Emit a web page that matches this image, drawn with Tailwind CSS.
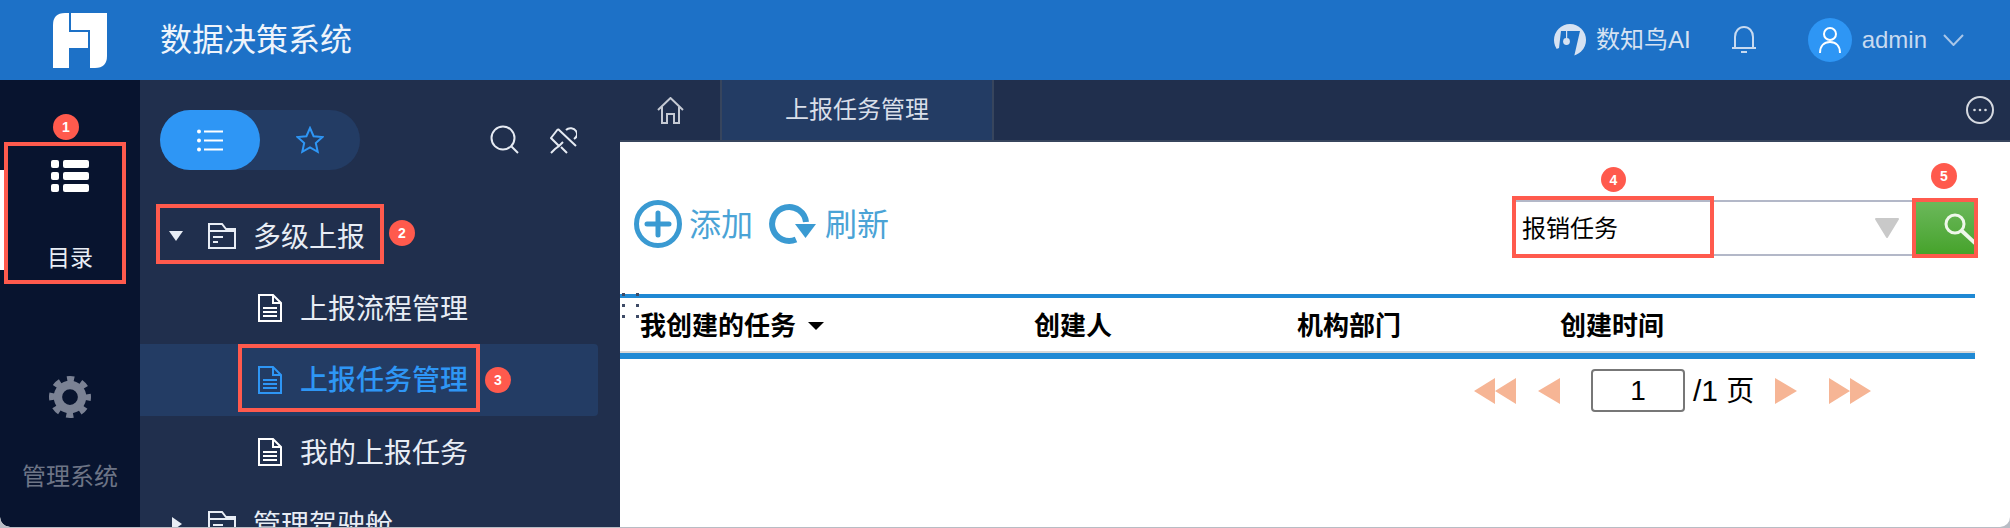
<!DOCTYPE html>
<html lang="zh-CN">

<head>
  <meta charset="UTF-8" />
  <title>数据决策系统</title>
  <script src="https://cdn.jsdelivr.net/npm/@tailwindcss/browser@4"></script>
</head>

<body class="relative w-[2010px] h-[528px] overflow-hidden bg-[#b8bcc4] font-['Liberation_Sans','Noto_Sans_CJK_SC',sans-serif]">
  <div class="h-[527px] overflow-hidden rounded-b-[10px] bg-white">
  <!-- top bar -->
  <header class="h-20 bg-[#1d71c7] flex items-center">
    <svg class="ml-[53px] w-[54px] h-[55px] fill-white" viewBox="0 0 54 55">
      <path d="M0 55V12Q0 0 12 0H16V19H35V35H16V55Z" />
      <path d="M18 0H54V43Q54 55 42 55H37V17H18Z" />
    </svg>
    <div class="ml-[53px] text-[32px] text-[#eef4fb]">数据决策系统</div>
    <div class="ml-auto flex items-center">
      <svg class="w-8 h-8" viewBox="0 0 32 32">
        <circle cx="16" cy="16" r="16" fill="#d6e2f2" />
        <path d="M7 7H26L20 33H0V26L5 24Z" fill="#1d71c7" />
        <rect x="12" y="7" width="1.2" height="8" fill="#d6e2f2" />
        <circle cx="12.5" cy="17.5" r="3.4" fill="#d6e2f2" />
      </svg>
      <div class="ml-[10px] text-2xl text-[#d6e2f2]">数知鸟AI</div>
      <svg class="ml-[41px] w-6 h-7 fill-none stroke-[#c8daf0] stroke-2" viewBox="0 0 24 28">
        <path d="M3 21V11C3 5 7 1 12 1S21 5 21 11V21M0 22H24M9 26H15" />
      </svg>
      <div class="ml-[52px] w-11 h-11 rounded-full bg-[#2e96f5] flex items-center justify-center">
        <svg class="w-6 h-7 fill-none stroke-white stroke-2" viewBox="0 0 24 28">
          <circle cx="12" cy="8" r="6" />
          <path d="M2 27C2 20 6 16 12 16S22 20 22 27" />
        </svg>
      </div>
      <div class="ml-[10px] text-2xl text-[#c8daf0]">admin</div>
      <svg class="ml-4 mr-[46px] w-[21px] h-3 fill-none stroke-[#a9c6e8] stroke-2" viewBox="0 0 21 12">
        <path d="M1 1L10.5 11L20 1" />
      </svg>
    </div>
  </header>

  <div class="flex h-[447px]">
    <!-- icon rail -->
    <aside class="w-[140px] shrink-0 bg-[#08142f] flex flex-col items-center rounded-bl-[10px]">
      <svg class="mt-20 w-[38px] h-8 fill-white" viewBox="0 0 38 32">
        <rect width="8" height="8" rx="2" />
        <rect x="12" width="26" height="8" rx="2" />
        <rect y="12" width="8" height="8" rx="2" />
        <rect x="12" y="12" width="26" height="8" rx="2" />
        <rect y="24" width="8" height="8" rx="2" />
        <rect x="12" y="24" width="26" height="8" rx="2" />
      </svg>
      <div class="mt-[49px] text-[23px] leading-[34px] text-[#e8edf5]">目录</div>
      <svg class="mt-[101px] w-[42px] h-[42px] fill-none stroke-[#7b8294]" viewBox="0 0 40 40">
        <circle cx="20" cy="20" r="11.5" stroke-width="8" />
        <circle cx="20" cy="20" r="17" stroke-width="6" stroke-dasharray="6.68 6.67" stroke-dashoffset="3.3" />
      </svg>
      <div class="mt-[42px] text-2xl leading-[34px] text-[#6d7486]">管理系统</div>
    </aside>

    <!-- tree panel -->
    <nav class="w-[480px] shrink-0 bg-[#202f4d] pt-[30px] overflow-hidden">
      <div class="flex items-center h-[60px] pl-5">
        <div class="flex w-[200px] h-[60px] rounded-full bg-[#233c64]">
          <div class="w-[100px] rounded-full bg-[#2e96f5] flex items-center justify-center">
            <svg class="w-[26px] h-[23px] fill-white" viewBox="0 0 26 23">
              <circle cx="2" cy="2.5" r="2" /><rect x="7" y="1.5" width="19" height="2" />
              <circle cx="2" cy="11.5" r="2" /><rect x="7" y="10.5" width="19" height="2" />
              <circle cx="2" cy="20.5" r="2" /><rect x="7" y="19.5" width="19" height="2" />
            </svg>
          </div>
          <div class="flex-1 flex items-center justify-center">
            <svg class="w-7 h-7 fill-none stroke-[#2e96f5] stroke-2" viewBox="0 0 28 28">
              <path d="M14 2L17.6 10.2L26.5 11.1L19.8 17L21.7 25.8L14 21.3L6.3 25.8L8.2 17L1.5 11.1L10.4 10.2Z" />
            </svg>
          </div>
        </div>
        <svg class="ml-[130px] w-[30px] h-[30px] fill-none stroke-[#e6ebf3] stroke-2" viewBox="0 0 30 30">
          <circle cx="13" cy="13" r="11.5" />
          <path d="M21.5 21.5L28 28" />
        </svg>
        <svg class="ml-[30px] w-[27px] h-[27px] fill-none stroke-[#e6ebf3] stroke-2" viewBox="0 0 27 27">
          <path d="M8 2L26 19M8 2L1 11L9 19L13 15M9 19L5 22L1 26M11 20L17 26M16 3C19 0 24 1 26 4C28 7 27 10 24 12" />
        </svg>
      </div>

      <div class="mt-[30px] text-[28px] text-[#e8edf5]">
        <div class="h-[72px] flex items-center">
          <div class="ml-[29px] w-0 h-0 border-x-[7px] border-x-transparent border-t-[10px] border-t-[#e8edf5]"></div>
          <svg class="ml-[25px] w-7 h-[26px] fill-none stroke-[#e8edf5] stroke-2" viewBox="0 0 28 26">
            <path d="M1 25V1H14L18 6H27V25ZM1 8H27M5 14H15M5 19H10" />
          </svg>
          <div class="ml-[17px] pt-[3px]">多级上报</div>
        </div>
        <div class="h-[72px] flex items-center">
          <svg class="ml-[118px] w-6 h-7 fill-none stroke-white stroke-2" viewBox="0 0 24 28">
            <path d="M1 27V1H15L23 9V27ZM15 1V9H23M5 14H19M5 18H19M5 22H19" />
          </svg>
          <div class="ml-[18px] pt-[3px]">上报流程管理</div>
        </div>
        <div class="h-[72px] flex items-center w-[458px] bg-[#233c64] rounded-r-[4px] text-[#2e96f5] font-medium">
          <svg class="ml-[118px] w-6 h-7 fill-none stroke-[#2e96f5] stroke-2" viewBox="0 0 24 28">
            <path d="M1 27V1H15L23 9V27ZM15 1V9H23M5 14H19M5 18H19M5 22H19" />
          </svg>
          <div class="ml-[18px] pt-[2px]">上报任务管理</div>
        </div>
        <div class="h-[72px] flex items-center">
          <svg class="ml-[118px] w-6 h-7 fill-none stroke-white stroke-2" viewBox="0 0 24 28">
            <path d="M1 27V1H15L23 9V27ZM15 1V9H23M5 14H19M5 18H19M5 22H19" />
          </svg>
          <div class="ml-[18px] pt-[3px]">我的上报任务</div>
        </div>
        <div class="h-[72px] flex items-center">
          <div class="ml-[32px] w-0 h-0 border-y-[7px] border-y-transparent border-l-[10px] border-l-[#e8edf5]"></div>
          <svg class="ml-[26px] w-7 h-[26px] fill-none stroke-[#e8edf5] stroke-2" viewBox="0 0 28 26">
            <path d="M1 25V1H14L18 6H27V25ZM1 8H27M5 14H15M5 19H10" />
          </svg>
          <div class="ml-[17px] pt-[3px]">管理驾驶舱</div>
        </div>
      </div>
    </nav>

    <!-- main area -->
    <main class="relative flex-1 min-w-0">
      <div class="flex h-[62px] bg-[#202f4d] border-b-2 border-[#37455d]">
        <div class="w-[100px] flex items-center justify-center">
          <svg class="w-[27px] h-[27px] fill-none stroke-[#c5cad4] stroke-2" viewBox="0 0 27 27">
            <path d="M1 13L13.5 1L26 13M5 10V26H10V17H17V26H22V10" />
          </svg>
        </div>
        <div class="w-[274px] flex items-center justify-center bg-[#233c64] border-x-2 border-[#37455d] text-2xl text-[#d9dfe9]">上报任务管理</div>
        <svg class="ml-auto mr-4 mt-4 w-7 h-7 fill-none stroke-[#d5d9e0] stroke-2" viewBox="0 0 28 28">
          <circle cx="14" cy="14" r="13" />
          <circle cx="8.5" cy="14" r="1.3" class="fill-[#d5d9e0] stroke-0" />
          <circle cx="14" cy="14" r="1.3" class="fill-[#d5d9e0] stroke-0" />
          <circle cx="19.5" cy="14" r="1.3" class="fill-[#d5d9e0] stroke-0" />
        </svg>
      </div>

      <!-- toolbar -->
      <div class="h-[152px] pt-[58px] pr-[36px] flex items-start">
        <div class="ml-[14px] h-12 flex items-center text-[32px] text-[#4aa3d6]">
          <svg class="w-12 h-12 fill-none stroke-[#3a9ad2]" viewBox="0 0 48 48">
            <circle cx="24" cy="24" r="21.5" stroke-width="5" />
            <path d="M13 24H35M24 13V35" stroke-width="5" stroke-linecap="round" />
          </svg>
          <div class="ml-[7px] pt-[2px]">添加</div>
          <svg class="ml-[16px] w-[47px] h-[42px]" viewBox="9 7 47 42">
            <path d="M46 26A17 17 0 1 0 36 43.5" fill="none" stroke="#3a9ad2" stroke-width="6" />
            <path d="M35 28H56L45.5 42Z" fill="#3a9ad2" />
          </svg>
          <div class="ml-[9px] pt-[2px]">刷新</div>
        </div>
        <div class="ml-auto flex">
          <div class="w-[404px] h-14 border-y-2 border-[#b3b8c8] flex items-center text-2xl text-black">
            <div class="ml-[10px] pt-[2px]">报销任务</div>
            <svg class="ml-auto mr-[16px] w-[26px] h-[22px] fill-[#c9c9c9] stroke-[#c9c9c9] stroke-2" stroke-linejoin="round" viewBox="0 0 26 22">
              <path d="M2 2H24L13 20Z" />
            </svg>
          </div>
          <div class="w-[58px] h-[52px] mt-[2px] bg-gradient-to-b from-[#6bb85a] to-[#46a32a] overflow-hidden">
            <svg class="w-[58px] h-[52px] fill-none stroke-[#eef7ea]" viewBox="0 0 58 52">
              <circle cx="39" cy="22" r="9" stroke-width="3" />
              <path d="M46 29L60 42" stroke-width="4" />
            </svg>
          </div>
        </div>
      </div>

      <!-- table head -->
      <div class="w-[1355px] h-[65px] border-t-4 border-b-[6px] border-[#1f89d4] relative">
        <div class="h-[53px] pt-[3px] grid grid-cols-[394px_263px_263px_1fr] items-center pl-5 text-[26px] font-bold text-black">
          <div class="flex items-center">我创建的任务
            <span class="ml-3 w-0 h-0 border-x-[8px] border-x-transparent border-t-[8px] border-t-black"></span>
          </div>
          <div>创建人</div>
          <div>机构部门</div>
          <div>创建时间</div>
        </div>
        <div class="absolute left-0 right-0 bottom-0 h-[2px] bg-[#d8d8d8]"></div>
      </div>

      <!-- pager -->
      <div class="mt-[10px] pl-[854px] h-[43px] flex items-center text-black">
        <svg class="w-[42px] h-[26px] fill-[#f6b595]" viewBox="0 0 42 26"><path d="M21 0V26L0 13ZM42 0V26L21 13Z" /></svg>
        <svg class="ml-[22px] w-[22px] h-[26px] fill-[#f6b595]" viewBox="0 0 22 26"><path d="M22 0V26L0 13Z" /></svg>
        <div class="ml-[31px] w-[94px] h-[43px] border-2 border-[#777] rounded-[4px] flex items-center justify-center text-[28px]">1</div>
        <div class="ml-2 w-[64px] text-[30px] whitespace-nowrap">/1 <span class="text-[28px]">页</span></div>
        <svg class="ml-[18px] w-[22px] h-[26px] fill-[#f6b595]" viewBox="0 0 22 26"><path d="M0 0V26L22 13Z" /></svg>
        <svg class="ml-[32px] w-[42px] h-[26px] fill-[#f6b595]" viewBox="0 0 42 26"><path d="M0 0V26L21 13ZM21 0V26L42 13Z" /></svg>
      </div>

      <!-- resize handle dots -->
      <div class="absolute left-[2px] top-[213px] grid grid-cols-2 gap-x-[11px] gap-y-[8px]">
        <i class="w-[3px] h-[3px] bg-[#3d4a66]"></i><i class="w-[3px] h-[3px] bg-[#3d4a66]"></i>
        <i class="w-[3px] h-[3px] bg-[#3d4a66]"></i><i class="w-[3px] h-[3px] bg-[#3d4a66]"></i>
        <i class="w-[3px] h-[3px] bg-[#3d4a66]"></i><i class="w-[3px] h-[3px] bg-[#3d4a66]"></i>
      </div>
    </main>
  </div>
  </div>

  <!-- red annotations over the screenshot -->
  <div class="absolute left-0 top-[170px] w-1 h-[100px] bg-white"></div>
  <div class="absolute left-[4px] top-[142px] w-[122px] h-[142px] border-4 border-[#ff5a4d]"></div>
  <div class="absolute left-[156px] top-[204px] w-[228px] h-[60px] border-4 border-[#ff5a4d]"></div>
  <div class="absolute left-[238px] top-[344px] w-[242px] h-[68px] border-4 border-[#ff5a4d]"></div>
  <div class="absolute left-[1512px] top-[196px] w-[202px] h-[62px] border-4 border-[#ff5a4d]"></div>
  <div class="absolute left-[1912px] top-[198px] w-[66px] h-[60px] border-4 border-[#ff5a4d]"></div>
  <div class="absolute left-[53px] top-[114px] w-[26px] h-[26px] rounded-full bg-[#ff5a4d] text-white text-sm font-bold flex items-center justify-center">1</div>
  <div class="absolute left-[389px] top-[220px] w-[26px] h-[26px] rounded-full bg-[#ff5a4d] text-white text-sm font-bold flex items-center justify-center">2</div>
  <div class="absolute left-[485px] top-[367px] w-[26px] h-[26px] rounded-full bg-[#ff5a4d] text-white text-sm font-bold flex items-center justify-center">3</div>
  <div class="absolute left-[1601px] top-[167px] w-[25px] h-[25px] rounded-full bg-[#ff5a4d] text-white text-sm font-bold flex items-center justify-center">4</div>
  <div class="absolute left-[1931px] top-[163px] w-[26px] h-[26px] rounded-full bg-[#ff5a4d] text-white text-sm font-bold flex items-center justify-center">5</div>
</body>

</html>
